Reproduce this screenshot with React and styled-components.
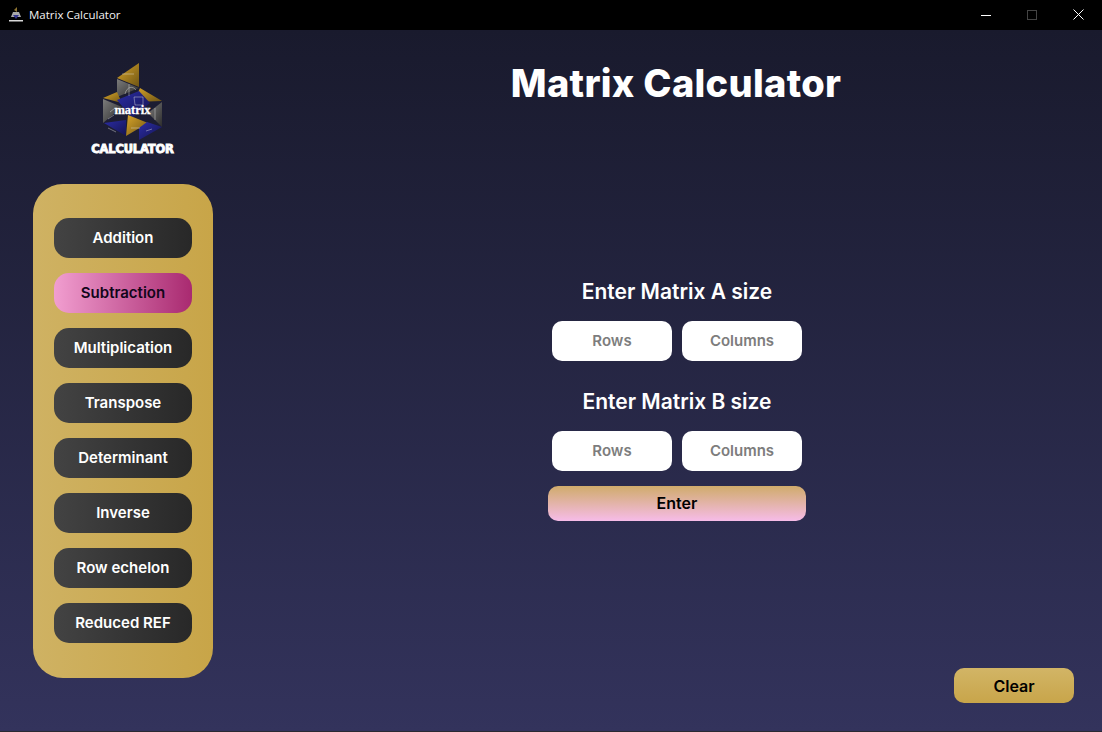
import React from 'react';
import styled, { createGlobalStyle } from 'styled-components';

const GlobalStyle = createGlobalStyle`
	html, body {
		margin: 0;
		padding: 0;
		height: 100%;
		background: #000;
	}
	#root {
		height: 100%;
	}
	* {
		box-sizing: border-box;
	}
`;

const Window = styled.div`
	width: 1102px;
	height: 732px;
	display: flex;
	flex-direction: column;
	overflow: hidden;
	font-family: Inter, 'Liberation Sans', sans-serif;
`;

const TitleBar = styled.header`
	height: 30px;
	flex: none;
	display: flex;
	align-items: center;
	background: #000;
	color: #fff;
	padding-left: 8px;
`;

const TitleText = styled.span`
	margin-left: 5px;
	margin-bottom: 1px;
	font-family: 'Open Sans', 'Liberation Sans', sans-serif;
	font-size: 11.5px;
	color: #f2f2f2;
`;

const WindowControls = styled.div`
	margin-left: auto;
	display: flex;
	height: 100%;
	padding-right: 1px;
	padding-bottom: 1px;
`;

const WindowControl = styled.div`
	width: 46px;
	height: 100%;
	display: flex;
	align-items: center;
	justify-content: center;
`;

const Body = styled.div`
	flex: 1;
	display: flex;
	gap: 39px;
	padding-left: 33px;
	background: linear-gradient(180deg, #191a2d 0%, #33335c 100%);
	border-bottom: 1px solid #2a2a33;
`;

const Sidebar = styled.aside`
	width: 180px;
	flex: none;
	display: flex;
	flex-direction: column;
`;

const LogoBox = styled.div`
	height: 154px;
	padding-top: 33px;
	padding-left: 19px;
	display: flex;
	flex-direction: column;
	align-items: center;
	position: relative;
`;

const LogoWord = styled.span`
	position: absolute;
	top: 72px;
	left: 19px;
	right: 0;
	text-align: center;
	font-family: 'Liberation Serif', serif;
	font-weight: 700;
	font-size: 12.5px;
	line-height: 16px;
	color: #fff;
	-webkit-text-stroke: 0.3px #fff;
`;

const LogoCaption = styled.span`
	margin-top: 2px;
	font-family: 'DejaVu Sans', sans-serif;
	font-weight: 700;
	font-size: 11.5px;
	line-height: 12px;
	letter-spacing: -0.2px;
	color: #fff;
	-webkit-text-stroke: 0.9px #fff;
`;

const Menu = styled.nav`
	height: 494px;
	padding: 34px 21px;
	display: flex;
	flex-direction: column;
	gap: 15px;
	border-radius: 30px;
	background: linear-gradient(90deg, #cfb263 0%, #c8a548 100%);
`;

const MenuButton = styled.button`
	height: 40px;
	border: none;
	border-radius: 15px;
	padding: 0 0 2px;
	font-family: inherit;
	font-weight: 600;
	font-size: 15px;
	color: ${({ $active }) => ($active ? '#12061a' : '#fff')};
	background: ${({ $active }) =>
		$active
			? 'linear-gradient(90deg, #f19ed0 0%, #a92a70 100%)'
			: 'linear-gradient(90deg, #434343 0%, #282828 100%)'};
`;

const Main = styled.main`
	flex: 1;
	display: flex;
	flex-direction: column;
	align-items: center;
	padding-top: 30px;
	padding-bottom: 28px;
`;

const Title = styled.h1`
	margin: 0 2px 0 0;
	height: 48px;
	font-size: 38px;
	line-height: 46px;
	font-weight: 800;
	letter-spacing: 0.3px;
	color: #fff;
`;

const SizeLabel = styled.h2`
	margin: ${({ $first }) => ($first ? '172px' : '29px')} 0 17px;
	font-size: 21px;
	line-height: 24px;
	font-weight: 600;
	color: #fff;
`;

const InputRow = styled.div`
	display: flex;
	gap: 10px;
`;

const SizeInput = styled.input`
	width: 120px;
	height: 40px;
	border: none;
	border-radius: 10px;
	padding: 0 0 2px;
	background: #fff;
	text-align: center;
	font-family: inherit;
	font-size: 15px;
	font-weight: 600;
	outline: none;

	&::placeholder {
		color: #7d7d7d;
	}
`;

const EnterButton = styled.button`
	width: 258px;
	height: 35px;
	margin-top: 15px;
	border: none;
	border-radius: 10px;
	padding: 0 0 2px;
	font-family: inherit;
	font-size: 16px;
	font-weight: 600;
	color: #000;
	background: linear-gradient(180deg, #d0ab6b 0%, #f6bce8 100%);
`;

const ClearButton = styled.button`
	width: 120px;
	height: 35px;
	margin-top: auto;
	margin-right: 28px;
	align-self: flex-end;
	border: none;
	border-radius: 10px;
	font-family: inherit;
	font-size: 16px;
	font-weight: 600;
	color: #000;
	background: linear-gradient(180deg, #d2b566 0%, #c8a54a 100%);
`;

const LogoMark = () => (
	<svg width="60" height="78" viewBox="103 63 60 78">
		<defs>
			<linearGradient id="gold" x1="0" y1="0" x2="1" y2="1">
				<stop offset="0" stopColor="#d9a528" />
				<stop offset="1" stopColor="#6d5415" />
			</linearGradient>
			<linearGradient id="grey" x1="0" y1="0" x2="1" y2="1">
				<stop offset="0" stopColor="#7c7c7c" />
				<stop offset="1" stopColor="#2c2c2c" />
			</linearGradient>
			<linearGradient id="blue" x1="0" y1="0" x2="1" y2="1">
				<stop offset="0" stopColor="#2b2ca6" />
				<stop offset="1" stopColor="#14144e" />
			</linearGradient>
		</defs>
		<polygon points="139,63 117,78 139,87" fill="url(#gold)" />
		<polygon points="117,79 139,88 117,97" fill="url(#grey)" />
		<polygon points="103,98 117,92 122,103" fill="url(#gold)" />
		<polygon points="140,88 162,101 134,102" fill="url(#gold)" />
		<polygon points="117,100 139,91 150,103 132,118" fill="url(#blue)" />
		<polygon points="103,99 103,123 122,107" fill="url(#grey)" />
		<polygon points="162,102 162,127 148,113" fill="url(#grey)" />
		<polygon points="104,123 126,136 126,120" fill="url(#blue)" />
		<polygon points="126,136 148,123 128,115" fill="url(#gold)" />
		<polygon points="139,140 162,127 147,122 139,128" fill="url(#blue)" />
		{/* chalk scribbles on the panels */}
		<path
			d="M125 94C127 86 133 86 136 90M129 84V96M122 74H134M110 112L115 108M108 119L114 115M155 108V120M108 128L116 132M131 128H140M146 131L152 129M134 97H143V105H135Z"
			stroke="#e6e6e6"
			strokeWidth="0.6"
			fill="none"
			opacity="0.7"
		/>
	</svg>
);

const AppIcon = () => (
	<svg width="16" height="18" viewBox="0 0 16 18">
		<polygon points="9,1 6,4 9,6" fill="#8c7330" />
		<polygon points="5,6 11,6 13,11 3,11" fill="#a8a8a8" />
		<polygon points="5,9 11,9 8,13" fill="#33348c" />
		<rect x="1" y="14" width="14" height="1.5" fill="#d8d8d8" />
	</svg>
);

const menuItems = [
	'Addition',
	'Subtraction',
	'Multiplication',
	'Transpose',
	'Determinant',
	'Inverse',
	'Row echelon',
	'Reduced REF',
];

export default function App() {
	return (
		<>
			<GlobalStyle />
			<Window>
				<TitleBar>
					<AppIcon />
					<TitleText>Matrix Calculator</TitleText>
					<WindowControls>
						<WindowControl>
							<svg width="10" height="10" viewBox="0 0 10 10">
								<path d="M0 5.5H10" stroke="#fff" strokeWidth="1" />
							</svg>
						</WindowControl>
						<WindowControl>
							<svg width="10" height="10" viewBox="0 0 10 10">
								<rect x="0.5" y="0.5" width="9" height="9" fill="none" stroke="#444" />
							</svg>
						</WindowControl>
						<WindowControl>
							<svg width="11" height="11" viewBox="0 0 11 11">
								<path d="M0.5 0.5L10.5 10.5M10.5 0.5L0.5 10.5" stroke="#fff" strokeWidth="1" />
							</svg>
						</WindowControl>
					</WindowControls>
				</TitleBar>
				<Body>
					<Sidebar>
						<LogoBox>
							<LogoMark />
							<LogoWord>matrix</LogoWord>
							<LogoCaption>CALCULATOR</LogoCaption>
						</LogoBox>
						<Menu>
							{menuItems.map((item) => (
								<MenuButton key={item} $active={item === 'Subtraction'}>
									{item}
								</MenuButton>
							))}
						</Menu>
					</Sidebar>
					<Main>
						<Title>Matrix Calculator</Title>
						<SizeLabel $first>Enter Matrix A size</SizeLabel>
						<InputRow>
							<SizeInput placeholder="Rows" />
							<SizeInput placeholder="Columns" />
						</InputRow>
						<SizeLabel>Enter Matrix B size</SizeLabel>
						<InputRow>
							<SizeInput placeholder="Rows" />
							<SizeInput placeholder="Columns" />
						</InputRow>
						<EnterButton>Enter</EnterButton>
						<ClearButton>Clear</ClearButton>
					</Main>
				</Body>
			</Window>
		</>
	);
}
